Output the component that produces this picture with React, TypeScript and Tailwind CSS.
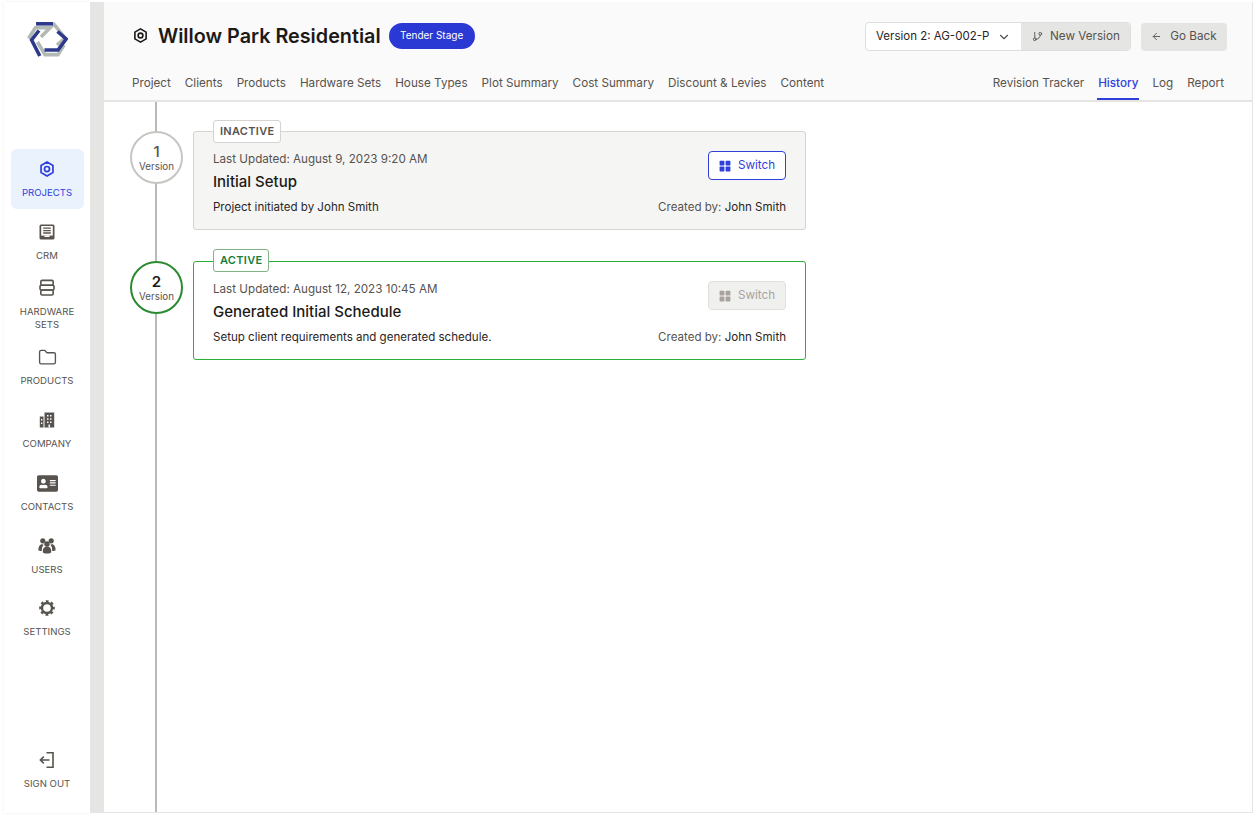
import React from "react";
import { ArrowLeft, ChevronDown, Folder, GitBranch } from "lucide-react";
import { FaAddressCard } from "react-icons/fa";

function Logo() {
  return (
    <svg width="41" height="36" viewBox="0 0 41 36" fill="none" strokeWidth="3.6" strokeLinejoin="miter">
      <polyline points="1.5,16.5 8.4,5.7 23,5.7 14,15" stroke="#b3b9b3" />
      <polyline points="26,1 38,16 30,23" stroke="#b3b9b3" />
      <polyline points="10.5,20 18,32.6 31,32.6 37,23" stroke="#b3b9b3" />
      <polyline points="9,1.8 26,1.8" stroke="#2d3a8c" />
      <polyline points="30.5,9.5 39.2,17 31,28 17.5,28" stroke="#2d3a8c" />
      <polyline points="12,8.5 4.6,18 12.8,34" stroke="#2d3a8c" />
    </svg>
  );
}

function HexIcon({ size = 20, color = "currentColor", sw = 2 }: { size?: number; color?: string; sw?: number }) {
  return (
    <svg width={size} height={size} viewBox="0 0 20 20" fill="none" stroke={color} strokeWidth={sw} strokeLinejoin="round">
      <path d="M10 2.2 16.6 6v8L10 17.8 3.4 14V6Z" />
      <circle cx="10" cy="10" r="2.8" />
    </svg>
  );
}

function CrmIcon() {
  return (
    <svg width="20" height="20" viewBox="0 0 20 20" fill="none">
      <rect x="2.5" y="2.5" width="15" height="15" rx="1.5" fill="#57534e" />
      <rect x="4.2" y="4" width="11.6" height="9.6" fill="#fff" />
      <path d="M6.2 6.2h7.6M6.2 8.6h7.6M6.2 11h7.6" stroke="#57534e" strokeWidth="1.3" />
      <rect x="7.5" y="13.5" width="5" height="1.5" fill="#fff" />
    </svg>
  );
}

function HardwareIcon() {
  return (
    <svg width="20" height="20" viewBox="0 0 20 20" fill="none" stroke="#57534e" strokeWidth="1.6" strokeLinejoin="round">
      <rect x="3.8" y="2.4" width="12.4" height="4.8" rx="1.4" />
      <rect x="3" y="7.2" width="14" height="4.8" rx="1.2" />
      <rect x="3.8" y="12" width="12.4" height="5" rx="1.4" />
    </svg>
  );
}

function CompanyIcon() {
  return (
    <svg width="20" height="20" viewBox="0 0 20 20">
      <path d="M7.5 2.5h9.7v15H7.5Z" fill="#57534e" />
      <path d="M2.8 6.5h3.7v11H2.8Z" fill="#57534e" />
      <path d="M4 9h1.3v1.6H4ZM4 12.4h1.3V14H4ZM10 5h1.5v1.6H10ZM13 5h1.5v1.6H13ZM10 8.2h1.5v1.6H10ZM13 8.2h1.5v1.6H13ZM10 11.4h1.5V13H10ZM13 11.4h1.5V13H13ZM11.5 14.5h1.5v3h-1.5Z" fill="#fff" />
    </svg>
  );
}

function UsersIcon() {
  return (
    <svg width="20" height="20" viewBox="0 0 20 20" fill="#57534e">
      <circle cx="5.8" cy="4.8" r="2.6" />
      <circle cx="14.2" cy="4.8" r="2.6" />
      <path d="M1.4 14.2c0-3.6 1.4-6 3.6-6 .8 0 1.3.2 1.7.5-1.2 1.2-1.9 3-1.9 5.6v.6c-1.6 0-3.4-.3-3.4-.7Z" />
      <path d="M18.6 14.2c0-3.6-1.4-6-3.6-6-.8 0-1.3.2-1.7.5 1.2 1.2 1.9 3 1.9 5.6v.6c1.6 0 3.4-.3 3.4-.7Z" />
      <circle cx="10" cy="8" r="2.7" />
      <path d="M5.8 15c0-2.7 1.6-4.4 4.2-4.4s4.2 1.7 4.2 4.4v1.2c0 .6-2.2 1.4-4.2 1.4s-4.2-.8-4.2-1.4Z" />
    </svg>
  );
}

function GearIcon() {
  return (
    <svg width="20" height="20" viewBox="0 0 20 20" fill="none" stroke="#57534e">
      <circle cx="10" cy="10" r="5" strokeWidth="2.4" />
      <circle cx="10" cy="10" r="6.8" strokeWidth="2" strokeDasharray="2.8 2.54" strokeDashoffset="1.4" />
    </svg>
  );
}

function SignOutIcon() {
  return (
    <svg width="20" height="20" viewBox="0 0 20 20" fill="none" stroke="#57534e" strokeWidth="1.6">
      <path d="M9.5 2.7h6.5v14.6H9.5" />
      <path d="M12.5 10H3.4M6.8 6.6 3.4 10l3.4 3.4" />
    </svg>
  );
}

function SwitchIcon({ color }: { color: string }) {
  return (
    <svg width="12" height="12" viewBox="0 0 12 12" fill={color}>
      <rect x="0.6" y="0.8" width="4.8" height="4.8" rx="0.6" />
      <rect x="6.6" y="0.8" width="4.8" height="4.8" rx="0.6" />
      <rect x="0.6" y="6.6" width="4.8" height="4.8" rx="0.6" />
      <rect x="6.6" y="6.6" width="4.8" height="4.8" rx="0.6" />
    </svg>
  );
}

function NavItem({ icon, label, cls }: { icon: React.ReactNode; label: React.ReactNode; cls: string }) {
  return (
    <div className={`flex w-full flex-col items-center ${cls}`}>
      <div className="flex h-5 items-center justify-center">{icon}</div>
      <div className="mt-[7px] text-center text-[9.6px] leading-[13px] text-[#57534e]">{label}</div>
    </div>
  );
}

const leftTabs = ["Project", "Clients", "Products", "Hardware Sets", "House Types", "Plot Summary", "Cost Summary", "Discount & Levies", "Content"];

function VersionRow({ active, num, badge, updated, title, desc }: { active: boolean; num: string; badge: string; updated: string; title: string; desc: string }) {
  return (
    <div className="flex items-start">
      <div
        className={
          active
            ? "z-10 flex h-[53px] w-[53px] shrink-0 flex-col items-center justify-center rounded-full border-2 border-[#2a8a30] bg-white pt-[2px]"
            : "z-10 flex h-[53px] w-[53px] shrink-0 flex-col items-center justify-center rounded-full border-2 border-[#c4c6c2] bg-white pt-[2px]"
        }
      >
        <div className={active ? "text-[15px] leading-[16px] font-semibold text-[#1c1917]" : "text-[15px] leading-[16px] font-medium text-[#57534e]"}>{num}</div>
        <div className="text-[9.8px] leading-[13px] text-[#57534e]">Version</div>
      </div>
      <div
        className={
          active
            ? "relative ml-[10px] flex h-[99px] w-[613px] rounded-[3px] border border-[#2bb03a] bg-white px-[19px]"
            : "relative ml-[10px] flex h-[99px] w-[613px] rounded-[3px] border border-[#d6d3d1] bg-[#f5f5f4] px-[19px]"
        }
      >
        <div
          className={
            active
              ? "absolute top-[-13px] left-[19px] flex h-[23px] items-center rounded-[3px] border border-[#7fb384] bg-white px-[6px] text-[11px] font-semibold tracking-[0.3px] text-[#15803d]"
              : "absolute top-[-12px] left-[19px] flex h-[23px] items-center rounded-[3px] border border-[#d6d3d1] bg-white px-[6px] text-[11px] font-semibold tracking-[0.3px] text-[#57534e]"
          }
        >
          {badge}
        </div>
        <div className="flex flex-1 flex-col pt-[20px]">
          <div className="text-[11.65px] leading-[14px] text-[#57534e]">{updated}</div>
          <div className="mt-[6px] text-[15px] leading-[20px] font-medium text-[#1c1917]">{title}</div>
          <div className="mt-[8px] text-[11.55px] leading-[14px] text-[#292524]">{desc}</div>
        </div>
        <div className="flex flex-col items-end pt-[19px]">
          <div
            className={
              active
                ? "flex h-[29px] w-[78px] items-center justify-center gap-[7px] rounded-[4px] border border-[#e0e0de] bg-[#f0f0ee] text-[11.7px] text-[#a8a29e]"
                : "flex h-[29px] w-[78px] items-center justify-center gap-[7px] rounded-[4px] border border-[#2f3fdc] bg-white text-[11.7px] text-[#2f3fdc]"
            }
          >
            <SwitchIcon color={active ? "#a8a29e" : "#2f3fdc"} />
            <span>Switch</span>
          </div>
          <div className="mt-[20px] text-[11.55px] leading-[14px] text-[#57534e]">
            Created by: <span className="text-[#292524]">John Smith</span>
          </div>
        </div>
      </div>
    </div>
  );
}

export default function App() {
  return (
    <div className="flex h-[821px] w-[1256px] overflow-hidden bg-white pt-[2px] pr-[3px] pb-[5px] pl-[4px] font-['Inter',sans-serif]">
      <aside className="flex h-[811px] w-[86px] shrink-0 flex-col items-center bg-white pb-[23px] shadow-[0_0_3px_rgba(0,0,0,0.08)]">
        <div className="mt-[20px] h-[36px]">
          <Logo />
        </div>
        <div className="mt-[91px] flex h-[60px] w-[73px] flex-col items-center rounded-[6px] bg-[#eaf2fe] pt-[10px]">
          <div className="flex h-5 items-center justify-center">
            <HexIcon size={18} color="#2f3fdc" sw={1.9} />
          </div>
          <div className="mt-[7px] text-[9.6px] leading-[13px] text-[#2f3fdc]">PROJECTS</div>
        </div>
        <NavItem cls="mt-[13px]" icon={<CrmIcon />} label="CRM" />
        <NavItem cls="mt-[16px]" icon={<HardwareIcon />} label={<>HARDWARE<br />SETS</>} />
        <NavItem cls="mt-[16px]" icon={<Folder size={19} color="#57534e" strokeWidth={1.7} />} label="PRODUCTS" />
        <NavItem cls="mt-[23px]" icon={<CompanyIcon />} label="COMPANY" />
        <NavItem cls="mt-[23px]" icon={<FaAddressCard size={21} color="#57534e" />} label="CONTACTS" />
        <NavItem cls="mt-[23px]" icon={<UsersIcon />} label="USERS" />
        <NavItem cls="mt-[22px]" icon={<GearIcon />} label="SETTINGS" />
        <NavItem cls="mt-auto" icon={<SignOutIcon />} label="SIGN OUT" />
      </aside>
      <div className="h-[811px] w-[14px] shrink-0 bg-[#e5e5e3]" />
      <main className="relative flex h-[811px] flex-1 flex-col border-r border-b border-[#e7e5e4] bg-white">
        <header className="flex h-[100px] shrink-0 flex-col border-b-2 border-[#e7e5e4] bg-[#fafafa] px-[28px]">
          <div className="flex h-[67px] items-center justify-between">
            <div className="flex items-center">
              <HexIcon size={17} color="#1c1917" sw={1.9} />
              <h1 className="ml-[9px] text-[19.8px] leading-[28px] font-semibold text-[#1c1917]">Willow Park Residential</h1>
              <div className="ml-[8px] flex h-[26px] w-[86px] items-center justify-center rounded-full bg-[#2a38d4] text-[10px] font-normal text-white">Tender Stage</div>
            </div>
            <div className="mt-[2px] mr-[-3px] flex items-center">
              <div className="flex h-[29px] overflow-hidden rounded-[4px] border border-[#dededc] bg-white">
                <div className="flex w-[155px] items-center justify-between pr-[10px] pl-[10px] text-[11.5px] whitespace-nowrap text-[#292524]">
                  <span>Version 2: AG-002-P</span>
                  <ChevronDown size={14} color="#57534e" />
                </div>
                <div className="flex w-[109px] items-center gap-[7px] bg-[#e5e5e3] pl-[11px] text-[11.7px] whitespace-nowrap text-[#57534e]">
                  <GitBranch size={11} color="#57534e" />
                  <span>New Version</span>
                </div>
              </div>
              <div className="ml-[10px] flex h-[28px] w-[86px] items-center justify-center gap-[8px] rounded-[4px] bg-[#e5e5e3] text-[11.7px] text-[#57534e]">
                <ArrowLeft size={11} color="#57534e" />
                <span>Go Back</span>
              </div>
            </div>
          </div>
          <div className="flex flex-1 items-start justify-between text-[11.7px] leading-[28px] text-[#57534e]">
            <div className="flex gap-[14px]">
              {leftTabs.map((t) => (
                <span key={t}>{t}</span>
              ))}
            </div>
            <div className="flex">
              <span>Revision Tracker</span>
              <span className="relative ml-[14px] font-medium text-[#2f3fdc]">
                History
                <span className="absolute right-[-1px] bottom-[-3px] left-[-1px] h-[2px] bg-[#2f3fdc]" />
              </span>
              <span className="ml-[14px]">Log</span>
              <span className="ml-[14px]">Report</span>
            </div>
          </div>
        </header>
        <div className="absolute top-[100px] bottom-0 left-[51px] w-[2px] bg-[#b8bcb6]" />
        <section className="flex flex-col gap-[31px] pt-[29px] pl-[26px]">
          <VersionRow active={false} num="1" badge="INACTIVE" updated="Last Updated: August 9, 2023 9:20 AM" title="Initial Setup" desc="Project initiated by John Smith" />
          <VersionRow active num="2" badge="ACTIVE" updated="Last Updated: August 12, 2023 10:45 AM" title="Generated Initial Schedule" desc="Setup client requirements and generated schedule." />
        </section>
      </main>
    </div>
  );
}
